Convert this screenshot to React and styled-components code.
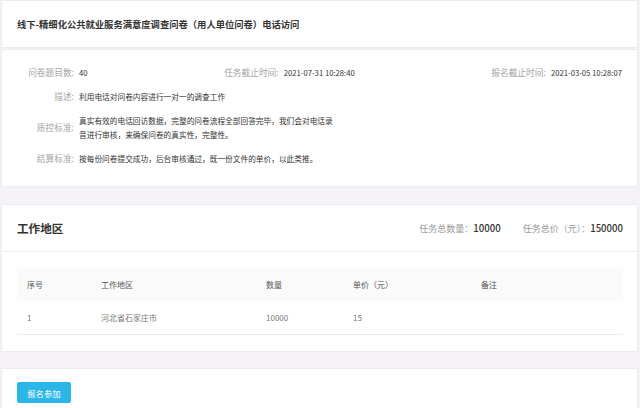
import React from "react";
import styled, { createGlobalStyle } from "styled-components";

const Global = createGlobalStyle`
  html, body { margin: 0; padding: 0; background: #f4f2f6; }
  body { font-family: "Noto Sans CJK SC", "Noto Sans", sans-serif; }
  * { box-sizing: border-box; }
`;

const Page = styled.div`
  width: 640px;
  height: 408px;
  overflow: hidden;
  padding: 0 2px 0 1px;
  display: flex;
  flex-direction: column;
  background: #f4f2f6;
`;

const Card = styled.div`
  background: #fff;
  border: 1px solid #ececec;
  margin-top: ${(p) => p.$gap || 0}px;
  flex-shrink: 0;
`;

const TitleBar = styled.div`
  height: 46px;
  display: flex;
  align-items: center;
  padding-left: 15px;
  font-size: 9.3px;
  font-weight: 700;
  color: #333;
`;

const Info = styled.div`
  height: 136px;
  padding: 16px 15px 0 15px;
  display: flex;
  flex-direction: column;
  gap: 10px;
  font-size: 7.7px;
  line-height: 14px;
`;

const TopRow = styled.div`
  display: flex;
  justify-content: space-between;
  align-items: center;
`;

const Item = styled.div`
  display: flex;
  align-items: center;
`;

const Label = styled.span`
  color: #a4a4a4;
  font-size: 8.7px;
  ${(p) => (p.$w ? `width: ${p.$w}px; text-align: right; flex-shrink: 0;` : "")}
`;

const Value = styled.span`
  color: #333;
  margin-left: 5px;
  ${(p) => (p.$w ? `width: ${p.$w}px;` : "")}
`;

const Header = styled.div`
  height: 47px;
  border-bottom: 1px solid #efefef;
  display: flex;
  align-items: center;
  justify-content: space-between;
  padding: 0 14px 0 15px;
`;

const H2 = styled.div`
  font-size: 11.6px;
  font-weight: 700;
  color: #333;
`;

const Stats = styled.div`
  display: flex;
  gap: 22px;
  font-size: 9px;
`;

const Stat = styled.span`
  color: #999;
  b {
    color: #333;
    font-weight: 500;
    font-size: 9.6px;
  }
`;

const TableWrap = styled.div`
  padding: 16px 14px 16px 15px;
`;

const Table = styled.table`
  width: 100%;
  border-collapse: collapse;
  font-size: 8px;
  th, td {
    text-align: left;
    font-weight: 400;
    padding: 0 0 0 10px;
    height: 33px;
  }
  th {
    background: #fafafa;
    color: #555;
  }
  td {
    color: #777;
    border-bottom: 1px solid #eee;
  }
`;

const Col = styled.col`
  width: ${(p) => p.$w}px;
`;

const Footer = styled.div`
  height: 44px;
  padding: 9px 15px 0;
`;

const Button = styled.button`
  width: 54px;
  height: 21px;
  border: none;
  border-radius: 2px;
  background: #2bb6e8;
  color: #fff;
  font-family: inherit;
  font-size: 8.4px;
  padding: 0;
  cursor: pointer;
`;

export default function App() {
  return (
    <>
      <Global />
      <Page>
        <Card>
          <TitleBar>线下-精细化公共就业服务满意度调查问卷（用人单位问卷）电话访问</TitleBar>
        </Card>
        <Card $gap={1}>
          <Info>
            <TopRow>
              <Item>
                <Label $w={57}>问卷题目数:</Label>
                <Value>40</Value>
              </Item>
              <Item>
                <Label>任务截止时间:</Label>
                <Value>2021-07-31 10:28:40</Value>
              </Item>
              <Item>
                <Label>报名截止时间:</Label>
                <Value>2021-03-05 10:28:07</Value>
              </Item>
            </TopRow>
            <Item>
              <Label $w={57}>描述:</Label>
              <Value>利用电话对问卷内容进行一对一的调查工作</Value>
            </Item>
            <Item>
              <Label $w={57}>质控标准:</Label>
              <Value $w={256}>真实有效的电话回访数据，完整的问卷流程全部回答完毕，我们会对电话录音进行审核，来确保问卷的真实性，完整性。</Value>
            </Item>
            <Item>
              <Label $w={57}>结算标准:</Label>
              <Value>按每份问卷提交成功，后台审核通过，既一份文件的单价，以此类推。</Value>
            </Item>
          </Info>
        </Card>
        <Card $gap={17}>
          <Header>
            <H2>工作地区</H2>
            <Stats>
              <Stat>任务总数量：<b>10000</b></Stat>
              <Stat>任务总价（元）：<b>150000</b></Stat>
            </Stats>
          </Header>
          <TableWrap>
            <Table>
              <colgroup>
                <Col $w={74} />
                <Col $w={165} />
                <Col $w={87} />
                <Col $w={128} />
                <col />
              </colgroup>
              <thead>
                <tr>
                  <th>序号</th>
                  <th>工作地区</th>
                  <th>数量</th>
                  <th>单价（元）</th>
                  <th>备注</th>
                </tr>
              </thead>
              <tbody>
                <tr>
                  <td>1</td>
                  <td>河北省石家庄市</td>
                  <td>10000</td>
                  <td>15</td>
                  <td></td>
                </tr>
              </tbody>
            </Table>
          </TableWrap>
        </Card>
        <Card $gap={16}>
          <Footer>
            <Button>报名参加</Button>
          </Footer>
        </Card>
      </Page>
    </>
  );
}
